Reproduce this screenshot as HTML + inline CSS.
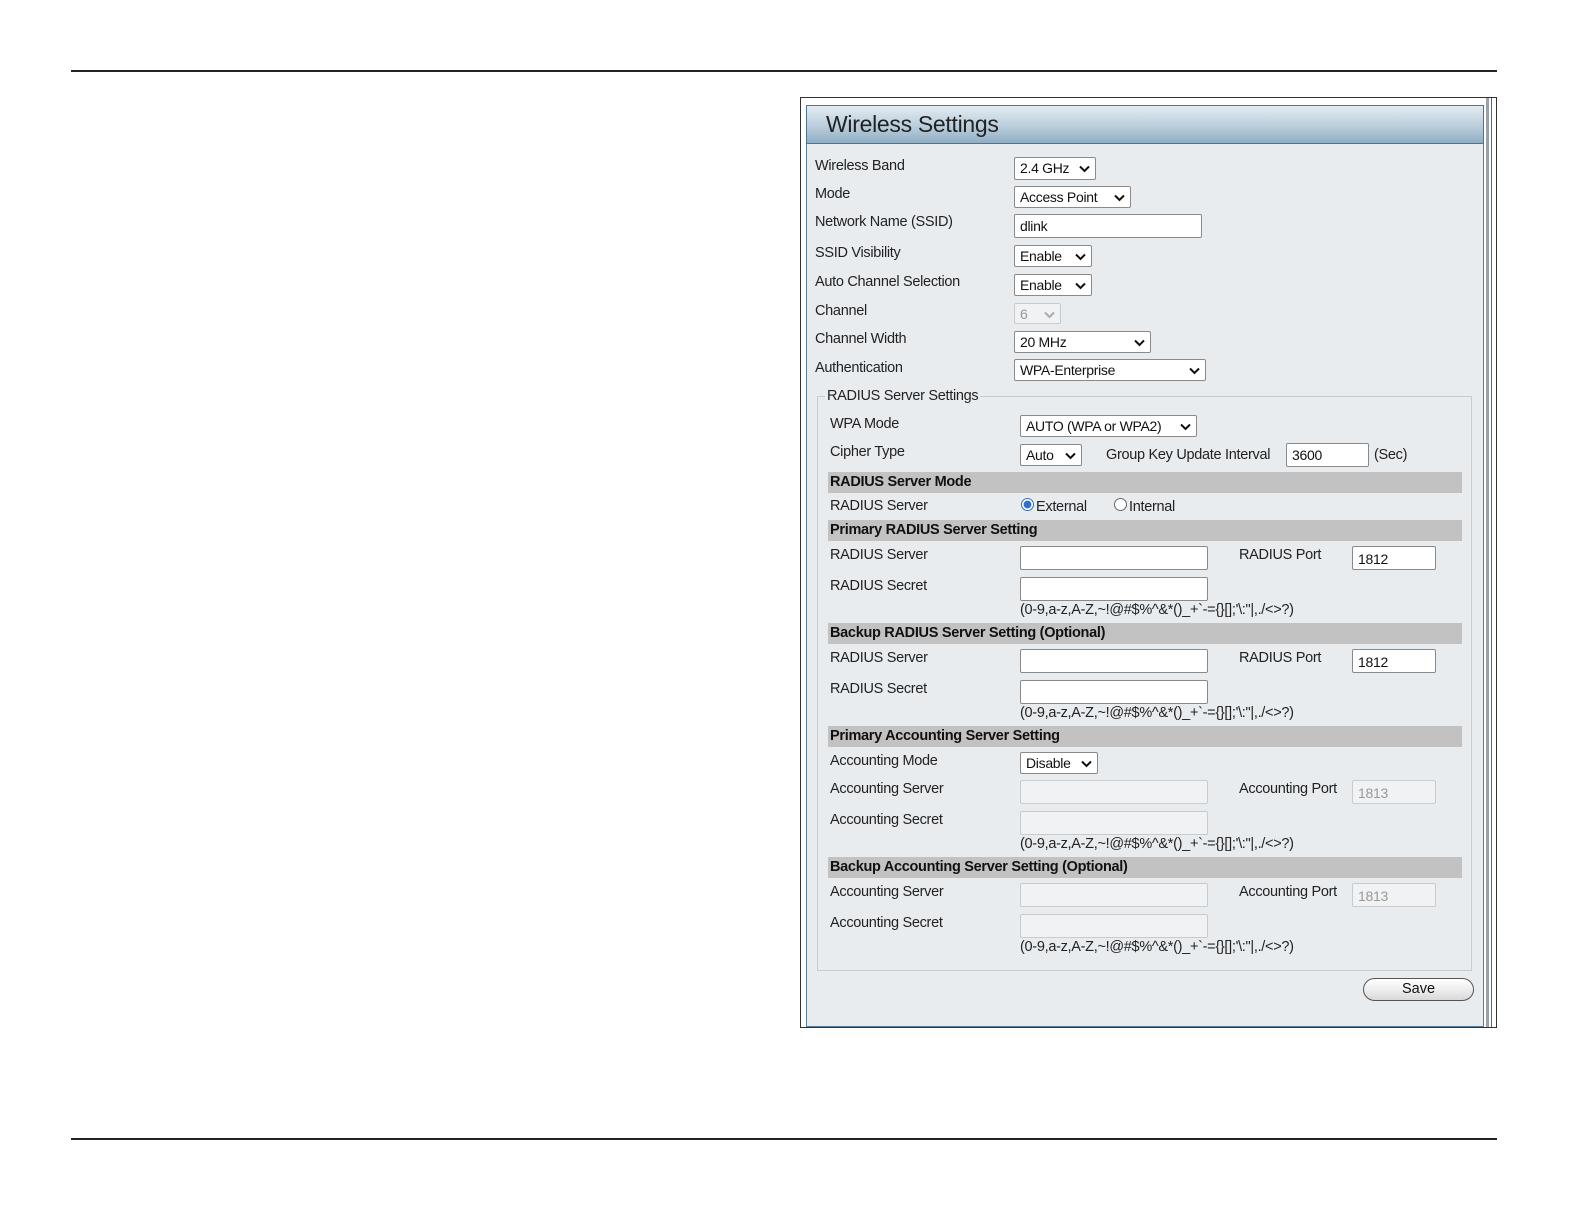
<!DOCTYPE html>
<html><head><meta charset="utf-8"><style>
body{margin:0;width:1584px;height:1224px;background:#fff;position:relative;font-family:"Liberation Sans",sans-serif;overflow:hidden}
.hr{position:absolute;left:71px;width:1426px;height:2px;background:#222}
.a{position:absolute}
.t{position:absolute;font-size:14.5px;color:#222;line-height:18px;white-space:nowrap;letter-spacing:-0.3px}
.box{position:absolute;background:#fff;border:1px solid #8a8a8a;border-radius:2px;box-sizing:border-box;font-size:14px;line-height:20px;padding-left:5px;color:#111;letter-spacing:-0.3px}
.dis{background:#f1f2f3;border-color:#c8cbce;color:#999}
.sel svg{position:absolute;right:5px;top:7px}
.bar{position:absolute;left:828px;width:634px;height:21px;background:#c2c2c2;font-weight:bold;font-size:14.5px;line-height:21px;padding-left:2px;box-sizing:border-box;color:#111;letter-spacing:-0.3px}
</style></head><body>
<div class="hr" style="top:70px"></div>
<div class="hr" style="top:1138px"></div>

<div class="a" style="left:800px;top:97px;width:697px;height:931px;border:1px solid #333;box-sizing:border-box;background:#fff"></div>
<div class="a" style="left:806px;top:105px;width:678px;height:922px;background:#e9ecef;border:1px solid #5a7d99;box-sizing:border-box"></div>
<div class="a" style="left:1486px;top:98px;width:3px;height:929px;background:#9aa3ab"></div>
<div class="a" style="left:1491px;top:98px;width:1px;height:929px;background:#666"></div>
<div class="a" style="left:806px;top:105px;width:678px;height:39px;background:linear-gradient(#e4ecf2,#b6cad9 60%,#8fadc4);border:1px solid #4f7392;box-sizing:border-box"></div>
<div class="t" style="left:826px;top:111px;font-size:23px;line-height:26px;color:#222">Wireless Settings</div>

<div class="t" style="left:815px;top:157px">Wireless Band</div>
<div class="t" style="left:815px;top:185px">Mode</div>
<div class="t" style="left:815px;top:213px">Network Name (SSID)</div>
<div class="t" style="left:815px;top:244px">SSID Visibility</div>
<div class="t" style="left:815px;top:273px">Auto Channel Selection</div>
<div class="t" style="left:815px;top:302px">Channel</div>
<div class="t" style="left:815px;top:330px">Channel Width</div>
<div class="t" style="left:815px;top:359px">Authentication</div>

<div class="box sel" style="left:1014px;top:157px;width:82px;height:23px">2.4 GHz<svg width="11" height="8" viewBox="0 0 11 8"><path d="M1 1.5l4.5 4.5 4.5-4.5" stroke="#111" stroke-width="2" fill="none"/></svg></div>
<div class="box sel" style="left:1014px;top:186px;width:117px;height:22px">Access Point<svg width="11" height="8" viewBox="0 0 11 8"><path d="M1 1.5l4.5 4.5 4.5-4.5" stroke="#111" stroke-width="2" fill="none"/></svg></div>
<div class="box" style="left:1014px;top:214px;width:188px;height:24px;line-height:23px">dlink</div>
<div class="box sel" style="left:1014px;top:245px;width:78px;height:22px">Enable<svg width="11" height="8" viewBox="0 0 11 8"><path d="M1 1.5l4.5 4.5 4.5-4.5" stroke="#111" stroke-width="2" fill="none"/></svg></div>
<div class="box sel" style="left:1014px;top:274px;width:78px;height:22px">Enable<svg width="11" height="8" viewBox="0 0 11 8"><path d="M1 1.5l4.5 4.5 4.5-4.5" stroke="#111" stroke-width="2" fill="none"/></svg></div>
<div class="box sel dis" style="left:1014px;top:303px;width:47px;height:21px">6<svg width="11" height="8" viewBox="0 0 11 8"><path d="M1 1.5l4.5 4.5 4.5-4.5" stroke="#aaa" stroke-width="2" fill="none"/></svg></div>
<div class="box sel" style="left:1014px;top:331px;width:137px;height:22px">20 MHz<svg width="11" height="8" viewBox="0 0 11 8"><path d="M1 1.5l4.5 4.5 4.5-4.5" stroke="#111" stroke-width="2" fill="none"/></svg></div>
<div class="box sel" style="left:1014px;top:359px;width:192px;height:22px">WPA-Enterprise<svg width="11" height="8" viewBox="0 0 11 8"><path d="M1 1.5l4.5 4.5 4.5-4.5" stroke="#111" stroke-width="2" fill="none"/></svg></div>

<div class="a" style="left:817px;top:396px;width:655px;height:575px;border:1px solid #c8ccd0;box-sizing:border-box"></div>
<div class="t" style="left:825px;top:387px;background:#e9ecef;padding:0 2px">RADIUS Server Settings</div>

<div class="t" style="left:830px;top:415px">WPA Mode</div>
<div class="box sel" style="left:1020px;top:415px;width:177px;height:22px">AUTO (WPA or WPA2)<svg width="11" height="8" viewBox="0 0 11 8"><path d="M1 1.5l4.5 4.5 4.5-4.5" stroke="#111" stroke-width="2" fill="none"/></svg></div>
<div class="t" style="left:830px;top:443px">Cipher Type</div>
<div class="box sel" style="left:1020px;top:444px;width:62px;height:22px">Auto<svg width="11" height="8" viewBox="0 0 11 8"><path d="M1 1.5l4.5 4.5 4.5-4.5" stroke="#111" stroke-width="2" fill="none"/></svg></div>
<div class="t" style="left:1106px;top:446px">Group Key Update Interval</div>
<div class="box" style="left:1286px;top:443px;width:83px;height:24px;line-height:23px">3600</div>
<div class="t" style="left:1374px;top:446px">(Sec)</div>

<div class="bar" style="top:472px">RADIUS Server Mode</div>
<div class="t" style="left:830px;top:497px">RADIUS Server</div>
<div class="a" style="left:1021px;top:498px;width:13px;height:13px;border-radius:50%;border:1px solid #3a6fb0;box-sizing:border-box;background:radial-gradient(#2f6fd0 45%,#fff 55%)"></div>
<div class="t" style="left:1036px;top:498px">External</div>
<div class="a" style="left:1114px;top:498px;width:13px;height:13px;border-radius:50%;border:1px solid #666;box-sizing:border-box;background:#fff"></div>
<div class="t" style="left:1129px;top:498px">Internal</div>

<div class="bar" style="top:520px">Primary RADIUS Server Setting</div>
<div class="t" style="left:830px;top:546px">RADIUS Server</div>
<div class="box" style="left:1020px;top:546px;width:188px;height:24px"></div>
<div class="t" style="left:1239px;top:546px">RADIUS Port</div>
<div class="box" style="left:1352px;top:546px;width:84px;height:24px;line-height:24px">1812</div>
<div class="t" style="left:830px;top:577px">RADIUS Secret</div>
<div class="box" style="left:1020px;top:577px;width:188px;height:24px"></div>
<div class="t" style="left:1020px;top:601px">(0-9,a-z,A-Z,~!@#$%^&amp;*()_+`-={}[];'\:"|,./&lt;&gt;?)</div>

<div class="bar" style="top:623px">Backup RADIUS Server Setting (Optional)</div>
<div class="t" style="left:830px;top:649px">RADIUS Server</div>
<div class="box" style="left:1020px;top:649px;width:188px;height:24px"></div>
<div class="t" style="left:1239px;top:649px">RADIUS Port</div>
<div class="box" style="left:1352px;top:649px;width:84px;height:24px;line-height:24px">1812</div>
<div class="t" style="left:830px;top:680px">RADIUS Secret</div>
<div class="box" style="left:1020px;top:680px;width:188px;height:24px"></div>
<div class="t" style="left:1020px;top:704px">(0-9,a-z,A-Z,~!@#$%^&amp;*()_+`-={}[];'\:"|,./&lt;&gt;?)</div>

<div class="bar" style="top:726px">Primary Accounting Server Setting</div>
<div class="t" style="left:830px;top:752px">Accounting Mode</div>
<div class="box sel" style="left:1020px;top:752px;width:78px;height:22px">Disable<svg width="11" height="8" viewBox="0 0 11 8"><path d="M1 1.5l4.5 4.5 4.5-4.5" stroke="#111" stroke-width="2" fill="none"/></svg></div>
<div class="t" style="left:830px;top:780px">Accounting Server</div>
<div class="box dis" style="left:1020px;top:780px;width:188px;height:24px"></div>
<div class="t" style="left:1239px;top:780px">Accounting Port</div>
<div class="box dis" style="left:1352px;top:780px;width:84px;height:24px;line-height:24px">1813</div>
<div class="t" style="left:830px;top:811px">Accounting Secret</div>
<div class="box dis" style="left:1020px;top:811px;width:188px;height:24px"></div>
<div class="t" style="left:1020px;top:835px">(0-9,a-z,A-Z,~!@#$%^&amp;*()_+`-={}[];'\:"|,./&lt;&gt;?)</div>

<div class="bar" style="top:857px">Backup Accounting Server Setting (Optional)</div>
<div class="t" style="left:830px;top:883px">Accounting Server</div>
<div class="box dis" style="left:1020px;top:883px;width:188px;height:24px"></div>
<div class="t" style="left:1239px;top:883px">Accounting Port</div>
<div class="box dis" style="left:1352px;top:883px;width:84px;height:24px;line-height:24px">1813</div>
<div class="t" style="left:830px;top:914px">Accounting Secret</div>
<div class="box dis" style="left:1020px;top:914px;width:188px;height:24px"></div>
<div class="t" style="left:1020px;top:938px">(0-9,a-z,A-Z,~!@#$%^&amp;*()_+`-={}[];'\:"|,./&lt;&gt;?)</div>

<div class="a" style="left:1363px;top:978px;width:111px;height:23px;border:1.5px solid #555;border-radius:12px;box-sizing:border-box;background:linear-gradient(#fff,#eee 50%,#d8d8d8);text-align:center;font-size:14.5px;line-height:21px;color:#111">Save</div>
</body></html>
